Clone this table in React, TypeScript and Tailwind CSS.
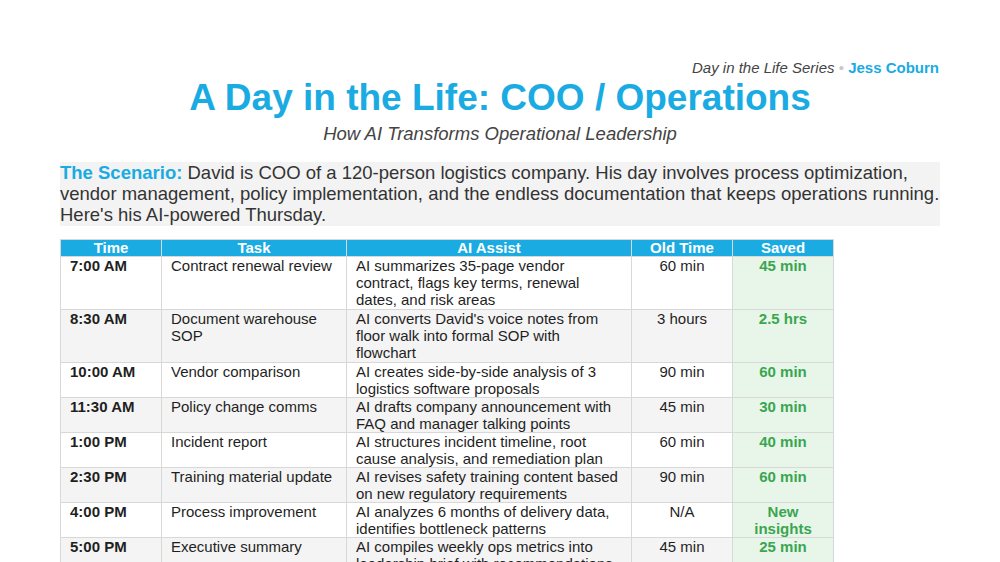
import React from "react";

const rows = [
  { time: "7:00 AM", task: "Contract renewal review", ai: "AI summarizes 35-page vendor contract, flags key terms, renewal dates, and risk areas", old: "60 min", saved: "45 min" },
  { time: "8:30 AM", task: "Document warehouse SOP", ai: "AI converts David's voice notes from floor walk into formal SOP with flowchart", old: "3 hours", saved: "2.5 hrs" },
  { time: "10:00 AM", task: "Vendor comparison", ai: "AI creates side-by-side analysis of 3 logistics software proposals", old: "90 min", saved: "60 min" },
  { time: "11:30 AM", task: "Policy change comms", ai: "AI drafts company announcement with FAQ and manager talking points", old: "45 min", saved: "30 min" },
  { time: "1:00 PM", task: "Incident report", ai: "AI structures incident timeline, root cause analysis, and remediation plan", old: "60 min", saved: "40 min" },
  { time: "2:30 PM", task: "Training material update", ai: "AI revises safety training content based on new regulatory requirements", old: "90 min", saved: "60 min" },
  { time: "4:00 PM", task: "Process improvement", ai: "AI analyzes 6 months of delivery data, identifies bottleneck patterns", old: "N/A", saved: "New insights" },
  { time: "5:00 PM", task: "Executive summary", ai: "AI compiles weekly ops metrics into leadership brief with recommendations", old: "45 min", saved: "25 min" },
];

export default function App() {
  return (
    <div
      className="w-[1000px] h-[562px] overflow-hidden bg-white px-[60px] pt-[58px]"
      style={{ fontFamily: '"Liberation Sans", Arial, sans-serif' }}
    >
      <div className="pr-[1px] text-right text-[15px] leading-[20px] italic text-[#444]">
        Day in the Life Series <span className="not-italic text-[#c8c8c8]">•</span>{" "}
        <span className="not-italic font-bold text-[#1aabe2]">Jess Coburn</span>
      </div>
      <h1 className="text-center text-[37px] leading-[40px] font-bold text-[#1aabe2]">
        A Day in the Life: COO / Operations
      </h1>
      <div className="mt-[5px] text-center text-[18.5px] leading-[22px] italic text-[#444]">
        How AI Transforms Operational Leadership
      </div>
      <p className="mt-[17px] bg-[#f3f3f3] pb-[1px] text-[18.5px] leading-[21px] text-[#333]">
        <span className="font-bold text-[#1aabe2]">The Scenario:</span> David is COO of a 120-person logistics company. His day involves process optimization, vendor management, policy implementation, and the endless documentation that keeps operations running. Here's his AI-powered Thursday.
      </p>
      <table className="mt-[13px] w-[773px] table-fixed border-collapse text-[15px] leading-[17px] text-[#1f1f1f]">
        <colgroup>
          <col className="w-[101px]" />
          <col className="w-[185px]" />
          <col className="w-[285px]" />
          <col className="w-[101px]" />
          <col className="w-[101px]" />
        </colgroup>
        <thead>
          <tr className="bg-[#1aabe2] text-white font-bold">
            {["Time", "Task", "AI Assist", "Old Time", "Saved"].map((h) => (
              <th key={h} className="border border-[#d8d8d8] px-2 py-0 text-center font-bold leading-[16px]">
                {h}
              </th>
            ))}
          </tr>
        </thead>
        <tbody>
          {rows.map((r, i) => (
            <tr key={r.time} className={i % 2 === 1 ? "bg-[#f4f4f4]" : "bg-white"}>
              <td className="border border-[#d8d8d8] px-[9px] align-top font-bold">{r.time}</td>
              <td className="border border-[#d8d8d8] px-[9px] align-top">{r.task}</td>
              <td className={`border border-[#d8d8d8] px-[9px] align-top ${i < 2 ? "pb-[1px]" : ""}`}>{r.ai}</td>
              <td className="border border-[#d8d8d8] px-1 align-top text-center">{r.old}</td>
              <td className="border border-[#d8d8d8] px-1 align-top text-center font-bold text-[#3aa650] bg-[#e8f5e9]">{r.saved}</td>
            </tr>
          ))}
        </tbody>
      </table>
    </div>
  );
}
